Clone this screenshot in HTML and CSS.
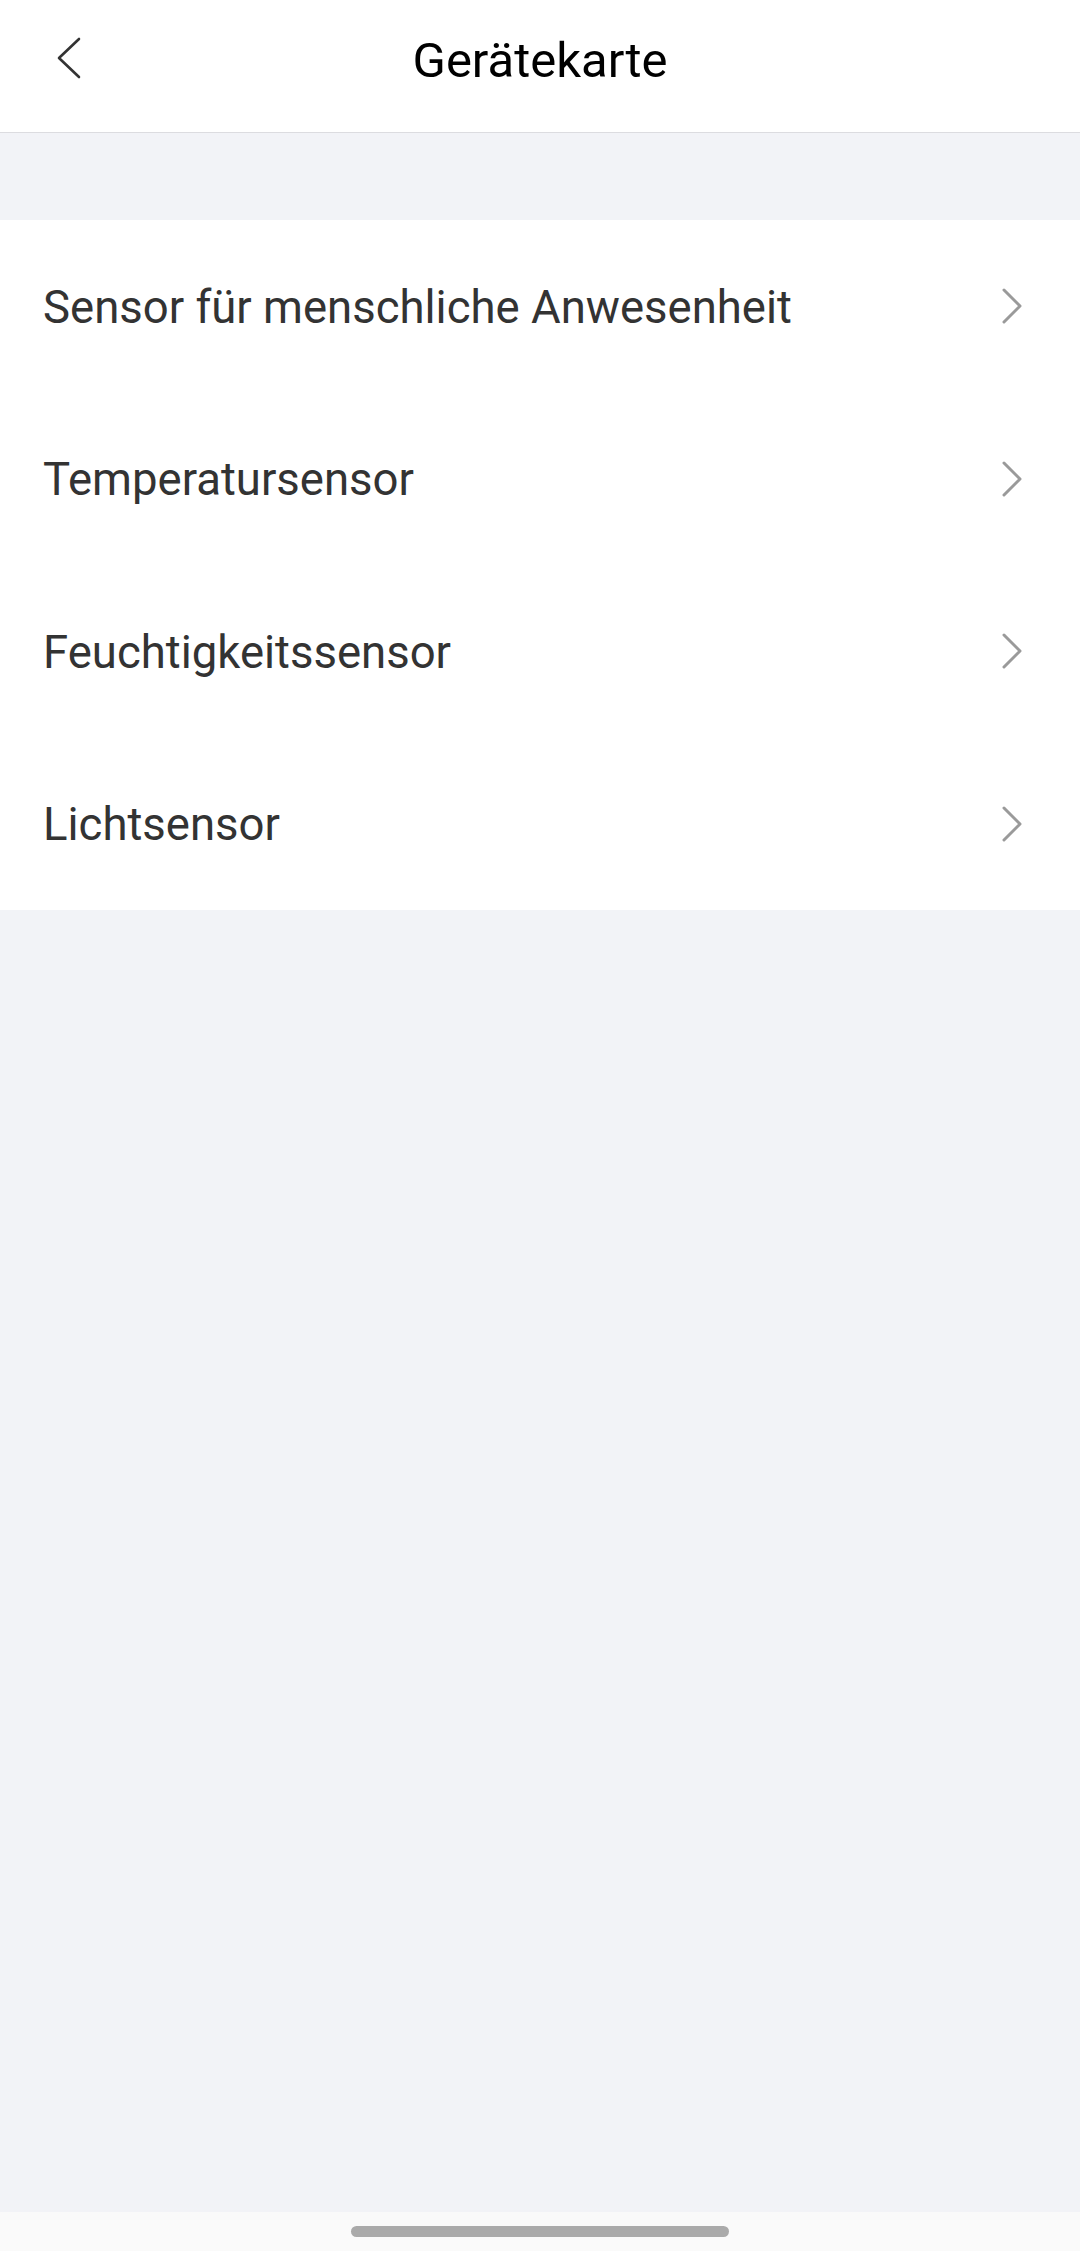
FILE: index.html
```html
<!DOCTYPE html>
<html lang="de">
<head>
    <meta charset="UTF-8">
    <meta name="viewport" content="width=device-width, initial-scale=1.0">
    <title>Gerätekarte</title>
    <link rel="stylesheet" href="styles.css">
</head>
<body>
    <div class="page">
        <header class="topbar">
            <button class="back-button" aria-label="Zurück">
                <svg width="28" height="44" viewBox="0 0 28 44">
                    <polyline points="24,3 4,22 24,41" fill="none" stroke="#333" stroke-width="2.6" stroke-linecap="round" stroke-linejoin="round"/>
                </svg>
            </button>
            <h1 class="title">Gerätekarte</h1>
        </header>

        <div class="spacer"></div>

        <ul class="device-list">
            <li class="device-item">
                <span class="device-name">Sensor für menschliche Anwesenheit</span>
                <svg class="chevron" width="22" height="36" viewBox="0 0 22 36">
                    <polyline points="3,2 19,18 3,34" fill="none" stroke="#9a9a9a" stroke-width="3" stroke-linecap="round" stroke-linejoin="round"/>
                </svg>
            </li>
            <li class="device-item">
                <span class="device-name">Temperatursensor</span>
                <svg class="chevron" width="22" height="36" viewBox="0 0 22 36">
                    <polyline points="3,2 19,18 3,34" fill="none" stroke="#9a9a9a" stroke-width="3" stroke-linecap="round" stroke-linejoin="round"/>
                </svg>
            </li>
            <li class="device-item">
                <span class="device-name">Feuchtigkeitssensor</span>
                <svg class="chevron" width="22" height="36" viewBox="0 0 22 36">
                    <polyline points="3,2 19,18 3,34" fill="none" stroke="#9a9a9a" stroke-width="3" stroke-linecap="round" stroke-linejoin="round"/>
                </svg>
            </li>
            <li class="device-item">
                <span class="device-name">Lichtsensor</span>
                <svg class="chevron" width="22" height="36" viewBox="0 0 22 36">
                    <polyline points="3,2 19,18 3,34" fill="none" stroke="#9a9a9a" stroke-width="3" stroke-linecap="round" stroke-linejoin="round"/>
                </svg>
            </li>
        </ul>

        <div class="filler"></div>

        <div class="nav-bar">
            <div class="nav-handle"></div>
        </div>
    </div>
</body>
</html>
```

FILE: styles.css
```css
html, body {
    margin: 0;
    padding: 0;
    height: 100%;
}

body {
    font-family: Roboto, "Noto Sans", Arial, sans-serif;
    background-color: #f2f3f7;
}

.page {
    display: flex;
    flex-direction: column;
    min-height: 100vh;
}

.topbar {
    position: relative;
    height: 133px;
    background-color: #fff;
    border-bottom: 1px solid #dcdce0;
    display: flex;
    align-items: center;
    justify-content: center;
    box-sizing: border-box;
}

.back-button {
    position: absolute;
    left: 55px;
    top: 36px;
    padding: 0;
    border: none;
    background: none;
    cursor: pointer;
}

.back-button svg {
    display: block;
}

.title {
    margin: 0;
    margin-top: -12px;
    font-size: 49px;
    font-weight: 400;
    color: #000;
}

.spacer {
    height: 87px;
}

.device-list {
    list-style: none;
    margin: 0;
    padding: 0;
    background-color: #fff;
}

.device-item {
    height: 172.5px;
    display: flex;
    align-items: center;
    justify-content: space-between;
    padding: 0 57px 0 43px;
    cursor: pointer;
}

.device-name {
    font-size: 45.5px;
    color: #333;
    margin-top: 2px;
}

.chevron {
    display: block;
}

.filler {
    flex: 1;
}

.nav-bar {
    height: 39px;
    background-color: #fafafa;
    display: flex;
    justify-content: center;
    padding-top: 14px;
    box-sizing: border-box;
}

.nav-handle {
    width: 378px;
    height: 11px;
    border-radius: 6px;
    background-color: #aaa;
}
```
